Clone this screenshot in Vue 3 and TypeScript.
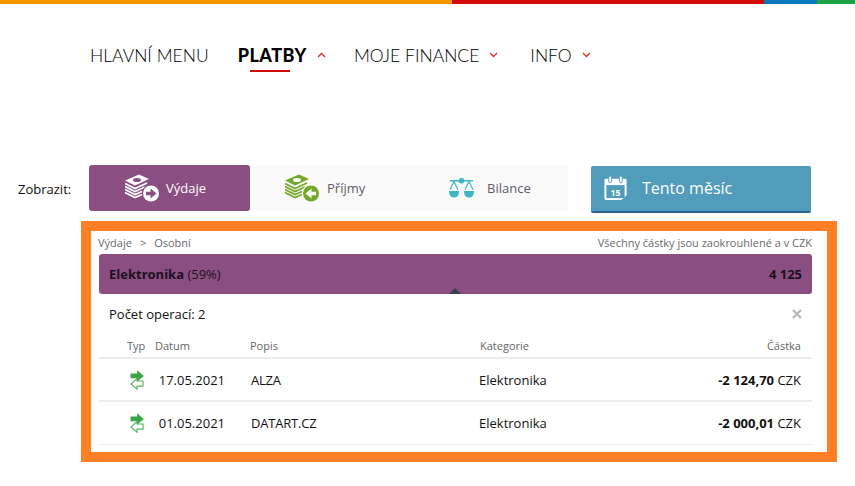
<script setup lang="ts">
interface Operation {
  date: string
  name: string
  category: string
  amount: string
}

const operations: Operation[] = [
  { date: '17.05.2021', name: 'ALZA', category: 'Elektronika', amount: '-2 124,70' },
  { date: '01.05.2021', name: 'DATART.CZ', category: 'Elektronika', amount: '-2 000,01' },
]

const bands = ['0,9.5 10,14.5 22,9', '0,12.5 10,17.5 20,13', '0,15.5 10,20.5 17,17.5', '0,18.5 10,23.5 17,20.5']
</script>

<template>
  <div class="page">
    <div class="stripe">
      <span class="orange"></span>
      <span class="red"></span>
      <span class="blue"></span>
      <span class="green"></span>
    </div>

    <nav class="menu">
      <a class="item first">HLAVNÍ MENU</a>
      <a class="item active">
        PLATBY
        <svg class="chev" width="9" height="6" viewBox="0 0 9 6"><path d="M1 5l3.500-3.500L8 5" /></svg>
      </a>
      <a class="item third">
        MOJE FINANCE
        <svg class="chev" width="9" height="6" viewBox="0 0 9 6"><path d="M1 1l3.500 3.500L8 1" /></svg>
      </a>
      <a class="item">
        INFO
        <svg class="chev" width="9" height="6" viewBox="0 0 9 6"><path d="M1 1l3.500 3.500L8 1" /></svg>
      </a>
    </nav>

    <div class="filter">
      <span class="label">Zobrazit:</span>
      <div class="tabs">
        <div class="tab selected">
          <svg width="35" height="28" viewBox="0 0 35 28">
            <path d="M0 6.500 14 0.500l10 4.500-14 6.500z" fill="#fff" />
            <ellipse cx="12" cy="6" rx="4" ry="2" fill="#8a4f80" />
            <polyline v-for="b in bands" :key="b" :points="b" fill="none" stroke="#fff" stroke-width="1.700" />
            <circle cx="26" cy="19.500" r="9.200" fill="#8a4f80" />
            <circle cx="26" cy="19.500" r="8" fill="#fff" />
            <path d="M21 17.800h4.500v-3.300l6 5-6 5v-3.300H21z" fill="#8a4f80" />
          </svg>
          <span>Výdaje</span>
        </div>
        <div class="tab income">
          <svg width="35" height="28" viewBox="0 0 35 28">
            <path d="M0 6.500 14 0.500l10 4.500-14 6.500z" fill="#73a82b" />
            <ellipse cx="12" cy="6" rx="4" ry="2" fill="#fafafa" />
            <polyline v-for="b in bands" :key="b" :points="b" fill="none" stroke="#73a82b" stroke-width="1.700" />
            <circle cx="26" cy="19.500" r="9.200" fill="#fafafa" />
            <circle cx="26" cy="19.500" r="8" fill="#73a82b" />
            <path d="M31 17.800h-4.500v-3.300l-6 5 6 5v-3.300H31z" fill="#fafafa" />
          </svg>
          <span>Příjmy</span>
        </div>
        <div class="tab balance">
          <svg width="25" height="20" viewBox="0 0 25 20">
            <g fill="#3fb5c4">
              <circle cx="12.500" cy="2.800" r="2.800" />
              <rect x="1" y="2" width="23" height="1.500" />
              <path d="M0 13h10c0 4.500-2 6.500-5 6.500S0 17.500 0 13zM15 13h10c0 4.500-2 6.500-5 6.500S15 17.500 15 13z" />
            </g>
            <path d="M1 11.800 5 3.500l4 8.300M16 11.800l4-8.300 4 8.300" fill="none" stroke="#3fb5c4" stroke-width="1.200" />
          </svg>
          <span>Bilance</span>
        </div>
      </div>
      <button class="month">
        <svg width="25" height="26" viewBox="0 0 26 26">
          <path d="M3 3.500h20a1.500 1.500 0 0 1 1.500 1.500v15.500L19 25.500H3A1.500 1.500 0 0 1 1.500 24V5A1.500 1.500 0 0 1 3 3.500z" fill="#fff" />
          <rect x="3.500" y="10" width="19" height="13.500" fill="#529cbb" />
          <rect x="6" y="0.500" width="3" height="7" rx="1.500" fill="#fff" stroke="#529cbb" />
          <rect x="17" y="0.500" width="3" height="7" rx="1.500" fill="#fff" stroke="#529cbb" />
          <text x="13" y="21" text-anchor="middle" class="day">15</text>
        </svg>
        <span>Tento měsíc</span>
      </button>
    </div>

    <section class="panel">
      <div class="crumbs">
        <div class="trail">
          <span>Výdaje</span>
          <span>&gt;</span>
          <span>Osobní</span>
        </div>
        <span>Všechny částky jsou zaokrouhlené a v CZK</span>
      </div>
      <div class="bar">
        <span><b>Elektronika</b> (59%)</span>
        <b>4 125</b>
        <i class="notch"></i>
      </div>
      <div class="count">
        <span>Počet operací: 2</span>
        <svg width="10" height="10" viewBox="0 0 10 10"><path d="M1 1l8 8M9 1l-8 8" /></svg>
      </div>
      <div class="grid head">
        <span class="type">Typ</span>
        <span>Datum</span>
        <span>Popis</span>
        <span>Kategorie</span>
        <span class="right">Částka</span>
      </div>
      <div v-for="op in operations" :key="op.date" class="grid row">
        <svg class="type-icon" width="14" height="20" viewBox="0 0 14 20">
          <path d="M13 11H7V8.500L1 14l6 5.200v-3h6z" fill="#fff" stroke="#5cb565" stroke-width="1.200" />
          <path d="M0.500 3.500h6.700V0.300L13.800 6l-6.600 5.600V8.300H0.500z" fill="#3aa648" />
        </svg>
        <span class="date">{{ op.date }}</span>
        <span class="name">{{ op.name }}</span>
        <span class="category">{{ op.category }}</span>
        <span class="right"><b>{{ op.amount }}</b> CZK</span>
      </div>
    </section>
  </div>
</template>

<style>
html,
body {
  margin: 0;
  background: #fff;
}
</style>

<style scoped>
.page {
  width: 855px;
  height: 486px;
  overflow: hidden;
  font-family: "Open Sans", "Liberation Sans", sans-serif;
  color: #111;
  font-size: 13px;
}

.stripe {
  display: flex;
  height: 4px;
}
.orange { width: 452px; background: #f59600; }
.red { width: 312px; background: #d20a0a; }
.blue { width: 53px; background: #0a78bd; }
.green { flex: 1; background: #1fa345; }

.menu {
  display: flex;
  align-items: center;
  height: 30px;
  margin-top: 36px;
  padding-left: 90px;
  font-family: Lato, "Open Sans", sans-serif;
  font-size: 17.500px;
  font-weight: 300;
  color: #000;
}
.item {
  position: relative;
  display: flex;
  align-items: center;
  white-space: nowrap;
  margin-right: 29px;
}
.item.third {
  margin-right: 32px;
}
.chev {
  margin-left: 10px;
  fill: none;
  stroke: #d8352a;
  stroke-width: 1.300;
}
.active {
  font-size: 18px;
  font-weight: 900;
  letter-spacing: 0.5px;
  margin-right: 28px;
}
.active::after {
  content: "";
  position: absolute;
  left: 12px;
  width: 40px;
  height: 2px;
  bottom: -6px;
  background: #d20f0f;
}

.filter {
  display: flex;
  align-items: center;
  height: 48px;
  margin-top: 95px;
  padding-left: 18px;
}
.label {
  width: 71px;
  margin-top: -1px;
}
.tabs {
  display: flex;
  width: 479px;
  height: 46px;
  margin-top: -3px;
  background: #fafafa;
  border-radius: 3px;
  color: #5f5a6b;
}
.tab {
  display: flex;
  align-items: center;
  box-sizing: border-box;
}
.selected {
  width: 161px;
  padding-left: 36px;
  gap: 6px;
  background: #8a4f80;
  color: #fff;
  border-radius: 3px;
}
.income {
  width: 160px;
  padding-left: 35px;
  gap: 7px;
}
.balance {
  padding-left: 39px;
  gap: 13px;
}
.month {
  display: flex;
  align-items: center;
  gap: 14px;
  width: 220px;
  height: 47px;
  margin-left: 23px;
  padding: 0 0 0 12px;
  border: 0;
  border-bottom: 2px solid #2b6190;
  border-radius: 2px;
  box-sizing: border-box;
  background: #529cbb;
  color: #fff;
  font-family: inherit;
  font-size: 16px;
}
.day {
  font-size: 9px;
  font-weight: 700;
  fill: #fff;
}

.panel {
  width: 756px;
  height: 241px;
  margin: 8px 0 0 81px;
  padding: 0 15px 0 8px;
  box-sizing: border-box;
  border: 10px solid #ff7f27;
}
.crumbs {
  display: flex;
  justify-content: space-between;
  height: 23px;
  align-items: center;
  font-size: 11px;
  color: #6a6a6a;
}
.trail {
  display: flex;
  gap: 8px;
  margin-left: -1px;
}
.bar {
  position: relative;
  display: flex;
  justify-content: space-between;
  align-items: center;
  height: 40px;
  padding: 0 10px;
  background: #8a4f80;
  border-radius: 3px;
  color: #1a1020;
}
.notch {
  position: absolute;
  left: 350px;
  bottom: 0;
  border: 6px solid transparent;
  border-top: 0;
  border-bottom-color: #3d4048;
}
.count {
  display: flex;
  justify-content: space-between;
  align-items: center;
  height: 40px;
  padding: 0 10px;
}
.count svg {
  fill: none;
  stroke: #b5b5b5;
  stroke-width: 2.200;
}
.grid {
  display: grid;
  grid-template-columns: 56px 95px 230px 1fr 200px;
  align-items: center;
  border-bottom: 2px solid #ececec;
}
.head {
  height: 25px;
  font-size: 11px;
  color: #666;
  padding-right: 11px;
  box-sizing: border-box;
}
.type {
  padding-left: 28px;
  white-space: nowrap;
}
.row {
  height: 43px;
  box-sizing: border-box;
  padding-right: 11px;
}
.row:last-child {
  border-bottom-width: 1px;
}
.type-icon {
  margin-left: 31px;
}
.date {
  width: 70px;
  text-align: right;
}
.name {
  margin-left: 1px;
  letter-spacing: -0.2px;
}
.category {
  margin-left: -1px;
}
.right {
  text-align: right;
}
</style>
